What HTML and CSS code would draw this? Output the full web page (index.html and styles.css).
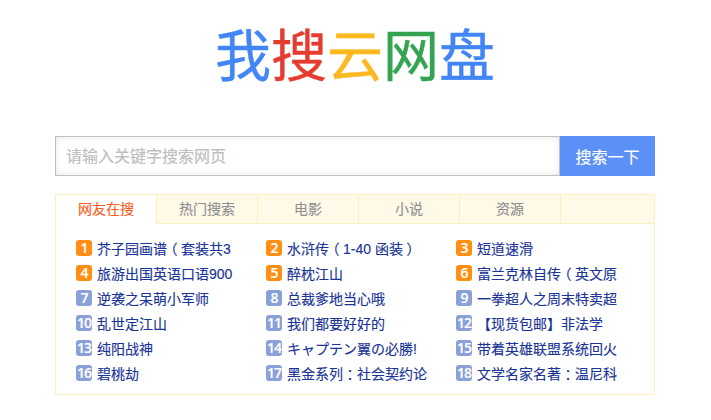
FILE: index.html
```html
<!DOCTYPE html>
<html lang="zh-CN">
<head>
    <meta charset="UTF-8">
    <title>我搜云网盘</title>
    <link rel="stylesheet" href="styles.css">
</head>
<body>
    <div class="container">
        <h1 class="logo"><span class="blue">我</span><span class="red">搜</span><span class="yellow">云</span><span class="green">网</span><span class="blue">盘</span></h1>
        <form class="search">
            <input class="search-input" type="text" placeholder="请输入关键字搜索网页">
            <button class="search-btn" type="button">搜索一下</button>
        </form>
        <div class="panel">
            <ul class="tabs">
                <li class="tab active">网友在搜</li>
                <li class="tab">热门搜索</li>
                <li class="tab">电影</li>
                <li class="tab">小说</li>
                <li class="tab">资源</li>
                <li class="tab"></li>
            </ul>
            <ol class="list">
                <li class="item"><span class="num hot">1</span>芥子园画谱<span class="mark">（</span>套装共3</li>
                <li class="item"><span class="num hot">2</span>水浒传<span class="mark">（</span>1-40 函装<span class="mark">）</span></li>
                <li class="item"><span class="num hot">3</span>短道速滑</li>
                <li class="item"><span class="num hot">4</span>旅游出国英语口语900</li>
                <li class="item"><span class="num hot">5</span>醉枕江山</li>
                <li class="item"><span class="num hot">6</span>富兰克林自传<span class="mark">（</span>英文原</li>
                <li class="item"><span class="num">7</span>逆袭之呆萌小军师</li>
                <li class="item"><span class="num">8</span>总裁爹地当心哦</li>
                <li class="item"><span class="num">9</span>一拳超人之周末特卖超</li>
                <li class="item"><span class="num">10</span>乱世定江山</li>
                <li class="item"><span class="num">11</span>我们都要好好的</li>
                <li class="item"><span class="num">12</span>【现货包邮】非法学</li>
                <li class="item"><span class="num">13</span>纯阳战神</li>
                <li class="item"><span class="num">14</span>キャプテン翼の必勝!</li>
                <li class="item"><span class="num">15</span>带着英雄联盟系统回火</li>
                <li class="item"><span class="num">16</span>碧桃劫</li>
                <li class="item"><span class="num">17</span>黑金系列<span class="mark">：</span>社会契约论</li>
                <li class="item"><span class="num">18</span>文学名家名著<span class="mark">：</span>温尼科</li>
            </ol>
        </div>
    </div>
</body>
</html>
```

FILE: styles.css
```css
* {
    box-sizing: border-box;
}

html, body {
    margin: 0;
    height: 420px;
    overflow: hidden;
    background-color: #fff;
}

body {
    font-family: "Liberation Sans", "Noto Sans CJK SC", sans-serif;
    -webkit-text-stroke: 0.15px;
}

.container {
    width: 600px;
    margin-left: 55px;
}

.logo {
    margin: 0;
    height: 136px;
    padding-top: 16px;
    text-align: center;
    font-size: 56px;
    line-height: 72px;
    font-weight: 400;
    font-family: "Noto Sans CJK SC", sans-serif;
    -webkit-text-stroke: 0.4px;
}

.blue { color: #4285f4; }
.red { color: #e53c2f; }
.yellow { color: #fbb91f; }
.green { color: #34a451; }

.search {
    display: flex;
    height: 40px;
    margin: 0;
}

.search-input {
    flex: 1;
    min-width: 0;
    height: 40px;
    padding: 1px 10px 0;
    border: 1px solid #c4c0c2;
    outline: none;
    font-size: 16px;
    font-family: inherit;
    box-shadow: inset 0 0 6px #e6e6e6;
}

.search-input::placeholder {
    color: #bdbdbd;
}

.search-btn {
    width: 95px;
    height: 40px;
    border: 0;
    padding: 0;
    background-color: #5b91f7;
    color: #fff;
    font-size: 16px;
    font-family: inherit;
}

.panel {
    height: 201px;
    margin-top: 18px;
    border: 1px solid #fdeec0;
}

.tabs {
    display: flex;
    height: 29px;
    margin: 0;
    padding: 0;
    list-style: none;
    background-color: #fff9e8;
    font-size: 14px;
    color: #8f8f8f;
}

.tab {
    width: 101px;
    line-height: 28px;
    text-align: center;
    border-right: 1px solid #fdeec0;
    border-bottom: 1px solid #fdeec0;
}

.tab:last-child {
    flex: 1;
    border-right: 0;
}

.active {
    background-color: #fff;
    border-bottom: 0;
    color: #f95e1e;
}

.list {
    display: grid;
    grid-template-columns: repeat(3, 190px);
    grid-auto-rows: 25px;
    margin: 0;
    padding: 11px 0 0 20px;
    list-style: none;
}

.item {
    display: flex;
    align-items: center;
    font-size: 14px;
    color: #1a3597;
    white-space: nowrap;
    overflow: hidden;
}

/* full-width punctuation sits centred in its cell */
.mark {
    width: 14px;
    text-align: center;
    font-feature-settings: "halt";
}

.num {
    flex: none;
    width: 16px;
    height: 16px;
    margin-right: 5px;
    border-radius: 3px;
    background-color: #8aa0d8;
    color: #fff;
    font-family: "Open Sans", sans-serif;
    font-size: 14px;
    font-weight: 600;
    line-height: 16px;
    text-align: center;
    letter-spacing: -1px;
}

.hot {
    background-color: #ff8e14;
}
```
